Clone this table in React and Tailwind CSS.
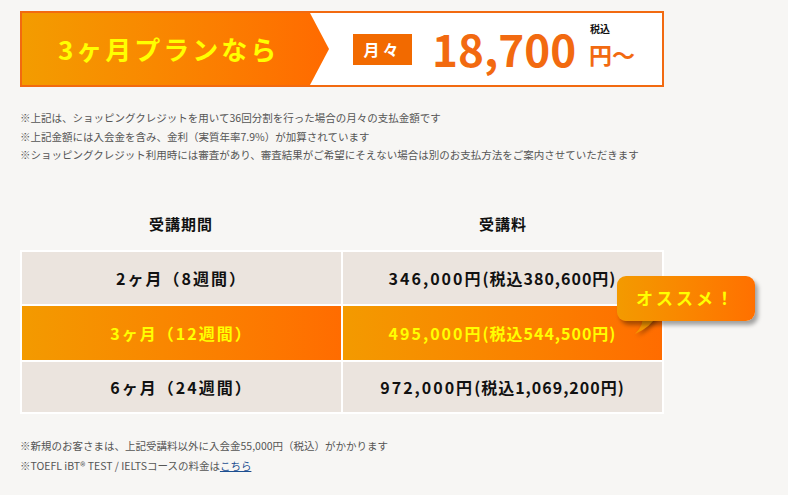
import React from "react";

const jp = { fontFamily: '"Noto Sans CJK JP", "Noto Sans", sans-serif' };

function Cell({ children, hl }) {
  return (
    <div
      className={
        "flex items-center justify-center font-bold text-[16px] tracking-[2px] " +
        (hl
          ? "bg-gradient-to-r from-[#f39a00] to-[#ff6c00] text-[#ffff00]"
          : "bg-[#ebe4de] text-[#111]")
      }
    >
      {children}
    </div>
  );
}

export default function App() {
  return (
    <div className="min-h-screen bg-[#f7f6f4] pl-5 pt-[11px]" style={jp}>
      <div className="w-[644px]">
        {/* Banner */}
        <div className="flex h-[76px] items-stretch border-2 border-[#f26a10] bg-white">
          <div
            className="flex w-[307px] items-center bg-gradient-to-r from-[#f39c00] to-[#ff6a00] pl-[36px]"
            style={{ clipPath: "polygon(0 0, 288px 0, 100% 50%, 288px 100%, 0 100%)" }}
          >
            <span className="text-[26px] font-bold tracking-[3px] text-[#ffff00] leading-none">
              3ヶ月プランなら
            </span>
          </div>
          <div className="ml-[24px] flex items-center">
            <div className="flex h-[31px] w-[59px] items-center justify-center bg-[#f26a00] text-[16px] font-bold tracking-[3px] text-white leading-none">
              月々
            </div>
            <div className="ml-[20px] text-[44px] font-bold leading-none tracking-[0px] text-[#f26a10] mt-[-2px]">
              18,700
            </div>
            <div className="ml-[13px] flex flex-col items-start">
              <span className="text-[10px] font-bold leading-none text-[#111] ml-[1px] mb-[9px] mt-[-9px]">税込</span>
              <span className="text-[23px] font-bold leading-none text-[#f26a10]">円～</span>
            </div>
          </div>
        </div>

        {/* Notes */}
        <div className="mt-[22px] text-[10.5px] leading-[18.5px] text-[#555]">
          <p>※上記は、ショッピングクレジットを用いて36回分割を行った場合の月々の支払金額です</p>
          <p>※上記金額には入会金を含み、金利（実質年率7.9%）が加算されています</p>
          <p>※ショッピングクレジット利用時には審査があり、審査結果がご希望にそえない場合は別のお支払方法をご案内させていただきます</p>
        </div>

        {/* Table header */}
        <div className="mt-[34px] grid h-[51px] grid-cols-2 text-[15px] font-bold tracking-[1px] text-[#111]">
          <div className="flex items-center justify-center">受講期間</div>
          <div className="flex items-center justify-center">受講料</div>
        </div>

        {/* Table */}
        <div className="relative">
          <div className="grid grid-cols-2 grid-rows-[52px_54px_50px] gap-[2px] bg-white p-[2px]">
            <Cell>2ヶ月（8週間）</Cell>
            <Cell>
              346,000円<span className="tracking-[1px]">(税込380,600円)</span>
            </Cell>
            <Cell hl>3ヶ月（12週間）</Cell>
            <Cell hl>
              495,000円<span className="tracking-[1px]">(税込544,500円)</span>
            </Cell>
            <Cell>6ヶ月（24週間）</Cell>
            <Cell>
              972,000円<span className="tracking-[1px]">(税込1,069,200円)</span>
            </Cell>
          </div>

          {/* Badge */}
          <div className="absolute left-[597px] top-[26px]">
            <svg
              className="absolute left-[14px] top-[38px]"
              width="32"
              height="24"
              viewBox="0 0 32 24"
              style={{ filter: "drop-shadow(2px 2px 2px rgba(0,0,0,0.35))" }}
            >
              <path d="M11 0 L27 0 Q20 13 4 20 Q14 10 11 0 Z" fill="#f49600" />
            </svg>
            <div className="relative flex h-[45px] w-[138px] items-center justify-center rounded-[9px] bg-gradient-to-r from-[#f39a00] to-[#ff7000] text-[17px] font-bold tracking-[3px] text-[#ffff00] shadow-[3px_4px_4px_rgba(0,0,0,0.35)]">
              オススメ！
            </div>
          </div>
        </div>

        {/* Footer notes */}
        <div className="mt-[22px] text-[10.5px] leading-[20px] text-[#555]">
          <p>※新規のお客さまは、上記受講料以外に入会金55,000円（税込）がかかります</p>
          <p>
            ※TOEFL iBT® TEST / IELTSコースの料金は
            <span className="text-[#1d4f91] underline">こちら</span>
          </p>
        </div>
      </div>
    </div>
  );
}
